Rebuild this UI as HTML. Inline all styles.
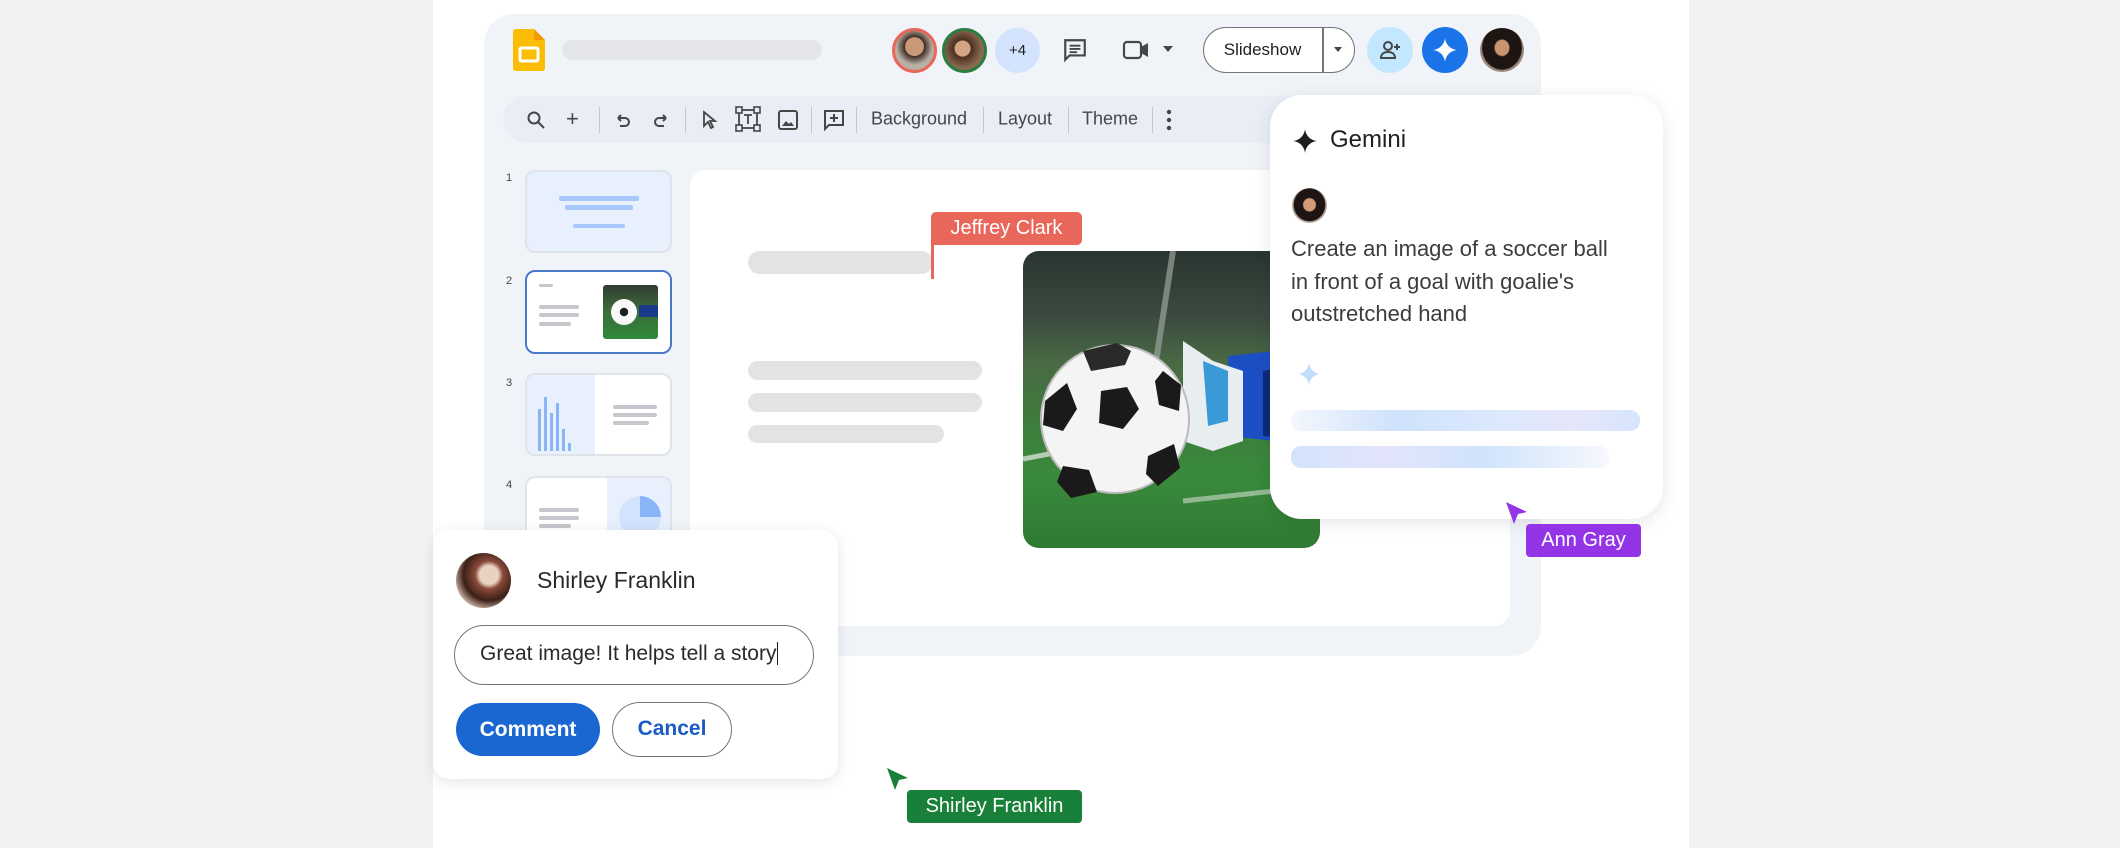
<!DOCTYPE html>
<html><head><meta charset="utf-8"><style>
*{box-sizing:border-box;margin:0;padding:0}
body{width:2120px;height:848px;background:#f2f2f2;font-family:"Liberation Sans",Arial,sans-serif;position:relative;overflow:hidden;color:#1f1f1f}
.abs{position:absolute}
.panel{left:433px;top:0;width:1256px;height:848px;background:#fff}
.frame{left:484px;top:14px;width:1057px;height:642px;background:#f0f4f9;border-radius:30px}
.circ{position:absolute;border-radius:50%}
.bar{position:absolute;background:#e2e3e5;border-radius:12px}
.tb{position:absolute;top:119px;transform:translateY(-50%);font-size:18px;color:#444746}
.sep{position:absolute;top:107px;width:1px;height:26px;background:#c7c7c7}
.thumb{position:absolute;left:525px;width:147px;border:2px solid #dfe3ea;border-radius:10px;background:#fff;overflow:hidden}
.num{position:absolute;left:506px;font-size:11px;color:#444}
.tl{position:absolute;height:4px;background:#c4c7cc;border-radius:2px}
.label{position:absolute;color:#fff;font-size:20px;border-radius:4px;text-align:center}
</style></head><body>
<div class="abs panel"></div>
<div class="abs frame"></div>

<!-- header -->
<svg class="abs" style="left:513px;top:29px" width="32" height="42" viewBox="0 0 32 42"><path d="M3 0h18l11 11v28a3 3 0 0 1-3 3H3a3 3 0 0 1-3-3V3a3 3 0 0 1 3-3z" fill="#fbbc04"/><path d="M21 0l11 11H23a2 2 0 0 1-2-2z" fill="#f29900"/><rect x="7" y="19" width="18" height="13" rx="1.5" fill="none" stroke="#fff" stroke-width="3"/></svg>
<div class="bar" style="left:562px;top:40px;width:260px;height:20px;background:#e3e5e8"></div>

<div class="circ" style="left:892px;top:28px;width:45px;height:45px;border:3px solid #e8675a;background:radial-gradient(circle at 50% 40%,#c99878 0 30%,#3d2a22 32%,#b8b0a4 60%)"></div>
<div class="circ" style="left:942px;top:28px;width:45px;height:45px;border:3px solid #2a7d3e;background:radial-gradient(circle at 45% 45%,#d4a584 0 25%,#4a2e20 28%,#8a6a50 65%)"></div>
<div class="circ" style="left:995px;top:28px;width:45px;height:45px;background:#d3e3fd;font-size:15px;text-align:center;line-height:45px;color:#1f1f1f">+4</div>
<svg class="abs" style="left:1062px;top:37px" width="26" height="26" viewBox="0 0 24 24"><path d="M3 3h18v14H7l-4 4z" fill="none" stroke="#444746" stroke-width="2"/><path d="M7 8h10M7 11h10M7 14h7" stroke="#444746" stroke-width="1.8"/></svg>
<svg class="abs" style="left:1122px;top:37px" width="30" height="26" viewBox="0 0 30 26"><rect x="2" y="5" width="17" height="16" rx="3" fill="none" stroke="#444746" stroke-width="2.2"/><path d="M19 10l7-4v14l-7-4z" fill="#444746"/></svg>
<svg class="abs" style="left:1162px;top:44px" width="12" height="10"><path d="M1 2h10L6 8z" fill="#444746"/></svg>
<div class="abs" style="left:1203px;top:27px;width:152px;height:46px;border:1.5px solid #747775;border-radius:23px;background:#fff"></div>
<div class="abs" style="left:1322px;top:27px;width:1.5px;height:46px;background:#747775"></div>
<div class="abs" style="left:1203px;top:27px;width:119px;height:46px;line-height:46px;text-align:center;font-size:17px">Slideshow</div>
<svg class="abs" style="left:1333px;top:46px" width="10" height="8"><path d="M1 1h8L5 6z" fill="#444746"/></svg>
<div class="circ" style="left:1367px;top:27px;width:46px;height:46px;background:#c2e7ff"></div>
<svg class="abs" style="left:1378px;top:38px" width="24" height="24" viewBox="0 0 24 24"><circle cx="10" cy="8" r="4" fill="none" stroke="#444746" stroke-width="2"/><path d="M3 20c0-4 3-6 7-6s7 2 7 6z" fill="none" stroke="#444746" stroke-width="2"/><path d="M19 6v6M16 9h6" stroke="#444746" stroke-width="2"/></svg>
<div class="circ" style="left:1422px;top:27px;width:46px;height:46px;background:#1a73e8"></div>
<svg class="abs" style="left:1432px;top:37px" width="26" height="26" viewBox="0 0 24 24"><path d="M12 1C12.7 7 17 11.3 23 12 17 12.7 12.7 17 12 23 11.3 17 7 12.7 1 12 7 11.3 11.3 7 12 1z" fill="#fff"/></svg>
<div class="circ" style="left:1480px;top:28px;width:44px;height:44px;background:radial-gradient(ellipse at 50% 45%,#c9946d 0 22%,#1e1512 26% 62%,#9b8a7c 66%)"></div>

<!-- toolbar -->
<div class="abs" style="left:503px;top:96px;width:1010px;height:47px;background:#e9eef6;border-radius:24px"></div>
<svg class="abs" style="left:526px;top:110px" width="20" height="20" viewBox="0 0 20 20"><circle cx="8" cy="8" r="5.5" fill="none" stroke="#444746" stroke-width="2"/><path d="M12 12l6 6" stroke="#444746" stroke-width="2"/></svg>
<div class="tb" style="left:566px;font-size:22px">+</div>
<div class="sep" style="left:599px"></div>
<svg class="abs" style="left:613px;top:110px" width="20" height="20" viewBox="0 0 20 20"><path d="M5 8h7a4 4 0 0 1 0 8H7M5 8l3-3M5 8l3 3" fill="none" stroke="#444746" stroke-width="2"/></svg>
<svg class="abs" style="left:651px;top:110px" width="20" height="20" viewBox="0 0 20 20"><path d="M15 8H8a4 4 0 0 0 0 8h5M15 8l-3-3M15 8l-3 3" fill="none" stroke="#444746" stroke-width="2"/></svg>
<div class="sep" style="left:685px"></div>
<svg class="abs" style="left:699px;top:109px" width="20" height="22" viewBox="0 0 20 22"><path d="M5 3v14l4-4 3 6 2-1-3-6h5z" fill="none" stroke="#444746" stroke-width="1.8"/></svg>
<svg class="abs" style="left:735px;top:106px" width="26" height="26" viewBox="0 0 26 26"><rect x="4" y="4" width="18" height="18" fill="none" stroke="#444746" stroke-width="1.8"/><rect x="1" y="1" width="6" height="6" fill="#e9eef6" stroke="#444746" stroke-width="1.6"/><rect x="19" y="1" width="6" height="6" fill="#e9eef6" stroke="#444746" stroke-width="1.6"/><rect x="1" y="19" width="6" height="6" fill="#e9eef6" stroke="#444746" stroke-width="1.6"/><rect x="19" y="19" width="6" height="6" fill="#e9eef6" stroke="#444746" stroke-width="1.6"/><path d="M9 9h8M13 9v9" stroke="#444746" stroke-width="1.8"/></svg>
<svg class="abs" style="left:777px;top:109px" width="22" height="22" viewBox="0 0 22 22"><rect x="2" y="2" width="18" height="18" rx="2" fill="none" stroke="#444746" stroke-width="2"/><path d="M5 17l4-5 3 3 2-2 3 4z" fill="#444746"/></svg>
<div class="sep" style="left:811px"></div>
<svg class="abs" style="left:822px;top:108px" width="24" height="24" viewBox="0 0 24 24"><path d="M3 3h18v14H7l-4 4z" fill="none" stroke="#444746" stroke-width="2"/><path d="M12 6v8M8 10h8" stroke="#444746" stroke-width="2"/></svg>
<div class="sep" style="left:856px"></div>
<div class="tb" style="left:871px">Background</div>
<div class="sep" style="left:983px"></div>
<div class="tb" style="left:998px">Layout</div>
<div class="sep" style="left:1068px"></div>
<div class="tb" style="left:1082px">Theme</div>
<div class="sep" style="left:1152px"></div>
<svg class="abs" style="left:1164px;top:108px" width="10" height="24"><circle cx="5" cy="4" r="2.2" fill="#444746"/><circle cx="5" cy="12" r="2.2" fill="#444746"/><circle cx="5" cy="20" r="2.2" fill="#444746"/></svg>

<!-- thumbnails -->
<div class="num" style="top:172px">1</div>
<div class="thumb" style="top:170px;height:83px;background:#e8effd">
 <div class="tl" style="left:32px;top:24px;width:80px;height:5px;background:#a8c7fa"></div>
 <div class="tl" style="left:38px;top:33px;width:68px;height:5px;background:#a8c7fa"></div>
 <div class="tl" style="left:46px;top:52px;width:52px;height:4px;background:#a8c7fa"></div>
</div>
<div class="num" style="top:275px">2</div>
<div class="thumb" style="top:270px;height:84px;border-color:#4a78c9;border-width:2px">
 <div class="tl" style="left:12px;top:12px;width:14px;height:3px"></div>
 <div class="tl" style="left:12px;top:33px;width:40px"></div>
 <div class="tl" style="left:12px;top:41px;width:40px"></div>
 <div class="tl" style="left:12px;top:50px;width:32px"></div>
 <div style="position:absolute;left:76px;top:13px;width:55px;height:54px;border-radius:3px;background:linear-gradient(#2f3b33,#3d6a3a 45%,#2f8a3a)"><div style="position:absolute;left:8px;top:14px;width:26px;height:26px;border-radius:50%;background:radial-gradient(circle at 50% 50%,#222 0 22%,#fafafa 24%)"></div><div style="position:absolute;left:36px;top:20px;width:19px;height:12px;background:#1a3a8a"></div></div>
</div>
<div class="num" style="top:377px">3</div>
<div class="thumb" style="top:373px;height:83px">
 <div style="position:absolute;left:0;top:0;width:68px;height:83px;background:#e8effd"></div>
 <svg style="position:absolute;left:8px;top:14px" width="50" height="62"><g fill="#8ab4f8"><rect x="3" y="20" width="3" height="42"/><rect x="9" y="8" width="3" height="54"/><rect x="15" y="24" width="3" height="38"/><rect x="21" y="14" width="3" height="48"/><rect x="27" y="40" width="3" height="22"/><rect x="33" y="54" width="3" height="8"/></g></svg>
 <div class="tl" style="left:86px;top:30px;width:44px"></div>
 <div class="tl" style="left:86px;top:38px;width:44px"></div>
 <div class="tl" style="left:86px;top:46px;width:36px"></div>
</div>
<div class="num" style="top:479px">4</div>
<div class="thumb" style="top:476px;height:70px;border-bottom:none;border-radius:10px 10px 0 0">
 <div style="position:absolute;left:80px;top:0;width:67px;height:70px;background:#e8effd"></div>
 <div style="position:absolute;left:92px;top:18px;width:42px;height:42px;border-radius:50%;background:conic-gradient(#8ab4f8 0 25%,#d3e3fd 25%)"></div>
 <div class="tl" style="left:12px;top:30px;width:40px"></div>
 <div class="tl" style="left:12px;top:38px;width:40px"></div>
 <div class="tl" style="left:12px;top:46px;width:32px"></div>
</div>

<!-- canvas -->
<div class="abs" style="left:690px;top:170px;width:820px;height:456px;background:#fff;border-radius:16px"></div>
<div class="bar" style="left:748px;top:251px;width:185px;height:23px"></div>
<div class="bar" style="left:748px;top:361px;width:234px;height:19px"></div>
<div class="bar" style="left:748px;top:393px;width:234px;height:19px"></div>
<div class="bar" style="left:748px;top:425px;width:196px;height:18px"></div>
<div class="label" style="left:931px;top:212px;width:151px;height:33px;line-height:33px;background:#e8675a;border-radius:5px 5px 5px 0">Jeffrey Clark</div>
<div class="abs" style="left:931px;top:245px;width:3px;height:34px;background:#e8675a"></div>

<!-- soccer image -->
<div class="abs" style="left:1023px;top:251px;width:297px;height:297px;border-radius:16px;overflow:hidden;background:linear-gradient(180deg,#2a3530 0%,#3b4a40 22%,#4a6a44 38%,#3f7a3c 55%,#3a8a3c 75%,#2f7a33 100%)">
 <svg width="297" height="297" viewBox="0 0 297 297">
  <path d="M150 0l-20 130" stroke="#9aa39c" stroke-width="6" opacity=".7"/>
  <path d="M0 208L297 150" stroke="#dfe6dc" stroke-width="5" opacity=".75"/>
  <path d="M160 250L297 235" stroke="#d0dccc" stroke-width="5" opacity=".6"/>
  <path d="M205 105l92-10v100l-92-10z" fill="#1d4fc4"/>
  <path d="M240 120l57-10v80l-57-5z" fill="#0d2a7a"/>
  <path d="M160 90l30 20 30 10 0 70-30 10-30-10z" fill="#e8eef0"/>
  <path d="M180 110l25 10v50l-20 5z" fill="#3a9ad8"/>
  <circle cx="92" cy="168" r="74" fill="#f4f4f4"/>
  <circle cx="92" cy="168" r="74" fill="none" stroke="#bbb" stroke-width="2"/>
  <path d="M78 140l26-4 12 22-16 20-24-6z" fill="#1a1a1a"/>
  <path d="M22 150l22-18 10 26-14 22-20-6z" fill="#1a1a1a"/>
  <path d="M140 120l18 14-2 26-20-6-4-24z" fill="#1a1a1a"/>
  <path d="M60 100l34-8 14 8-6 14-34 6z" fill="#2a2a2a"/>
  <path d="M40 215l26 4 8 22-26 6-14-16z" fill="#1a1a1a"/>
  <path d="M125 205l26-12 6 24-22 18-12-12z" fill="#1a1a1a"/>
 </svg>
</div>

<!-- gemini card -->
<div class="abs" style="left:1270px;top:95px;width:393px;height:424px;background:#fff;border-radius:32px;box-shadow:0 4px 18px rgba(0,0,0,.10)"></div>
<svg class="abs" style="left:1292px;top:128px" width="26" height="26" viewBox="0 0 24 24"><path d="M12 1C12.7 7 17 11.3 23 12 17 12.7 12.7 17 12 23 11.3 17 7 12.7 1 12 7 11.3 11.3 7 12 1z" fill="#1f1f1f"/></svg>
<div class="abs" style="left:1330px;top:126px;font-size:24px">Gemini</div>
<div class="circ" style="left:1292px;top:188px;width:35px;height:35px;background:radial-gradient(ellipse at 50% 48%,#d29a76 0 24%,#1e1512 28% 62%,#b5aca2 66%)"></div>
<div class="abs" style="left:1291px;top:233px;font-size:22px;line-height:32.5px;color:#3c3c3c">Create an image of a soccer ball<br>in front of a goal with goalie's<br>outstretched hand</div>
<svg class="abs" style="left:1297px;top:361px" width="24" height="26" viewBox="0 0 24 24"><path d="M12 1C12.7 7 17 11.3 23 12 17 12.7 12.7 17 12 23 11.3 17 7 12.7 1 12 7 11.3 11.3 7 12 1z" fill="#c4dcfb"/></svg>
<div class="abs" style="left:1291px;top:410px;width:349px;height:21px;border-radius:10px;background:linear-gradient(90deg,#f4f7fd,#cfe2fc 30%,#dce9fd 60%,#e7e6fb 80%,#d6e5fc)"></div>
<div class="abs" style="left:1291px;top:446px;width:318px;height:22px;border-radius:10px;background:linear-gradient(90deg,#d3e3fc,#e3e4fb 30%,#cfe3fb 60%,#f6f8fd)"></div>
<svg class="abs" style="left:1503px;top:500px" width="26" height="28" viewBox="0 0 26 28"><path d="M3 2l21 10-9 2-4 10z" fill="#9334e6"/></svg>
<div class="label" style="left:1526px;top:524px;width:115px;height:33px;line-height:33px;background:#9334e6">Ann Gray</div>

<!-- comment card -->
<div class="abs" style="left:433px;top:530px;width:405px;height:249px;background:#fff;border-radius:16px;box-shadow:0 3px 14px rgba(0,0,0,.10)"></div>
<div class="circ" style="left:456px;top:553px;width:55px;height:55px;background:radial-gradient(ellipse at 60% 40%,#e8d2c2 0 20%,#8a4a3a 30%,#3a2018 55%,#c9b0a0 75%)"></div>
<div class="abs" style="left:537px;top:567px;font-size:23px;color:#2a2a2a">Shirley Franklin</div>
<div class="abs" style="left:454px;top:625px;width:360px;height:60px;border:1.5px solid #747775;border-radius:30px"></div>
<div class="abs" style="left:480px;top:642px;font-size:21px;color:#2a2a2a">Great image! It helps tell a story<span style="border-left:1.5px solid #222;margin-left:1px"></span></div>
<div class="abs" style="left:456px;top:703px;width:144px;height:53px;border-radius:27px;background:#1a67d2;color:#fff;font-size:21px;font-weight:bold;text-align:center;line-height:53px">Comment</div>
<div class="abs" style="left:612px;top:702px;width:120px;height:55px;border-radius:28px;border:1.5px solid #747775;color:#1a5bc4;font-size:21px;font-weight:bold;text-align:center;line-height:52px">Cancel</div>

<svg class="abs" style="left:884px;top:766px" width="26" height="28" viewBox="0 0 26 28"><path d="M3 2l21 10-9 2-4 10z" fill="#188038"/></svg>
<div class="label" style="left:907px;top:790px;width:175px;height:33px;line-height:33px;background:#188038">Shirley Franklin</div>
</body></html>
